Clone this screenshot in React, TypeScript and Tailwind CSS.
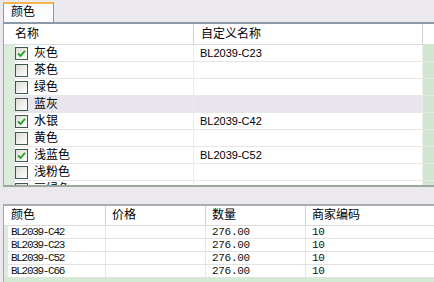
import React from "react";

const upperRows = [
  { name: "灰色", custom: "BL2039-C23", checked: true },
  { name: "茶色", custom: "", checked: false },
  { name: "绿色", custom: "", checked: false },
  { name: "蓝灰", custom: "", checked: false, selected: true },
  { name: "水银", custom: "BL2039-C42", checked: true },
  { name: "黄色", custom: "", checked: false },
  { name: "浅蓝色", custom: "BL2039-C52", checked: true },
  { name: "浅粉色", custom: "", checked: false },
  { name: "豆绿色", custom: "", checked: false },
];

const lowerRows = [
  { color: "BL2039-C42", price: "", qty: "276.00", code: "10" },
  { color: "BL2039-C23", price: "", qty: "276.00", code: "10" },
  { color: "BL2039-C52", price: "", qty: "276.00", code: "10" },
  { color: "BL2039-C66", price: "", qty: "276.00", code: "10" },
];

const Checkbox = ({ checked }: { checked: boolean }) => (
  <span className="w-[13px] h-[13px] border border-[#3c5a4a] bg-gradient-to-br from-[#dcdcd6] to-[#ffffff] flex items-center justify-center shrink-0">
    {checked && (
      <svg width="9" height="9" viewBox="0 0 9 9">
        <path d="M1 4.5 L3.5 7 L8 1.8" fill="none" stroke="#21a121" strokeWidth="1.8" />
      </svg>
    )}
  </span>
);

export default function App() {
  return (
    <div
      className="w-[434px] h-[282px] bg-[#ebe9ed] overflow-hidden flex flex-col text-[12px] text-black"
      style={{ fontFamily: '"Liberation Sans", "Noto Sans CJK SC", sans-serif' }}
    >
      {/* tab strip */}
      <div className="h-[22px] flex items-end pl-[3px] shrink-0">
        <div className="w-[51px] h-[20px] bg-[#fcfcfe] border-x border-[#919b9c] border-t-2 border-t-[#f3b64a] pl-[7px] leading-[17px]">
          颜色
        </div>
      </div>

      {/* upper grid */}
      <div className="ml-[3px] h-[165px] border-t-2 border-t-[#8c9aa6] border-l border-l-[#9aa4ac] border-b-2 border-b-[#9aa8a0] bg-white flex flex-col overflow-hidden shrink-0">
        <div className="h-[21px] flex border-b border-[#dcdcdc] shrink-0">
          <div className="w-[190px] pl-[11px] leading-[20px] border-r border-[#d0d0d0]">名称</div>
          <div className="w-[229px] pl-[7px] leading-[20px] border-r border-[#d0d0d0]">自定义名称</div>
          <div className="flex-1" />
        </div>
        {upperRows.map((r, i) => (
          <div
            key={i}
            className={`h-[17px] flex border-b border-[#e6e6e6] shrink-0 ${r.selected ? "bg-[#e8e6ec]" : "bg-white"}`}
          >
            <div className="w-[190px] flex items-center border-r border-[#ececec]">
              <div className="w-[11px] h-full bg-[#dcecdc]" />
              <Checkbox checked={r.checked} />
              <span className="ml-[6px] leading-none">{r.name}</span>
            </div>
            <div className="w-[229px] pl-[6px] flex items-center text-[11px] border-r border-[#ececec]">{r.custom}</div>
            <div className="flex-1 bg-[#cfe7d1]" />
          </div>
        ))}
      </div>

      {/* splitter gap */}
      <div className="h-[17px] shrink-0" />

      {/* lower grid */}
      <div className="ml-[3px] flex-1 border-t-2 border-t-[#a9adb5] border-l border-l-[#9aa4ac] bg-white flex flex-col overflow-hidden">
        <div className="h-[20px] flex border-b border-[#dcdcdc] shrink-0">
          <div className="w-[102px] pl-[7px] leading-[19px] border-r border-[#d0d0d0]">颜色</div>
          <div className="w-[100px] pl-[6px] leading-[19px] border-r border-[#d0d0d0]">价格</div>
          <div className="w-[100px] pl-[6px] leading-[19px] border-r border-[#d0d0d0]">数量</div>
          <div className="flex-1 pl-[6px] leading-[19px]">商家编码</div>
        </div>
        {lowerRows.map((r, i) => (
          <div
            key={i}
            className="h-[13px] flex border-b border-[#e2e2e2] shrink-0 leading-[12px] text-[11px] text-[#111]"
            style={{ fontFamily: '"Liberation Mono", monospace' }}
          >
            <div className="w-[102px] flex border-r border-[#e6e6e6]">
              <div className="w-[4px] bg-[#dcecdc]" />
              <span className="pl-[3px] tracking-[-1.3px]">{r.color}</span>
            </div>
            <div className="w-[100px] border-r border-[#e6e6e6]">{r.price}</div>
            <div className="w-[100px] pl-[6px] tracking-[-0.3px] border-r border-[#e6e6e6]">{r.qty}</div>
            <div className="flex-1 pl-[6px] tracking-[-0.3px]">{r.code}</div>
          </div>
        ))}
        <div className="flex-1 bg-[#d4e9d4]" />
      </div>
    </div>
  );
}
